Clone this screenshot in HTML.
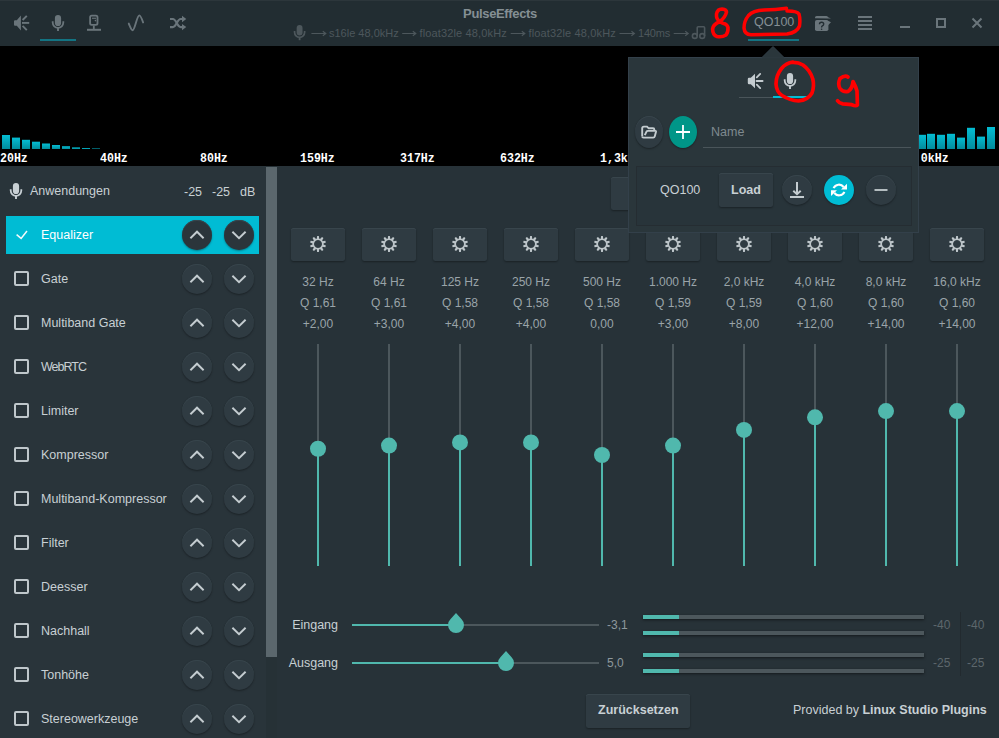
<!DOCTYPE html><html><head><meta charset="utf-8"><style>
*{box-sizing:border-box}
html,body{margin:0;padding:0}
body{width:999px;height:738px;overflow:hidden;position:relative;background:#273238;font-family:"Liberation Sans",sans-serif;color:#c8d0d4}
.abs{position:absolute}
.t{position:absolute;white-space:nowrap;line-height:1}
svg{position:absolute;overflow:visible}
.btn{position:absolute;background:#2f3b42;border-radius:2.5px;box-shadow:0 1px 2px rgba(0,0,0,.35), inset 0 1px 0 #38454c}
.circ{position:absolute;border-radius:50%;background:#2f3b42;box-shadow:0 1px 2px rgba(0,0,0,.35), inset 0 1px 0 #38454c}
</style></head><body>

<div class="abs" style="left:0;top:0;width:999px;height:46px;background:#222d32;border-top:1px solid #2c363b"></div>
<svg width="999" height="46" style="left:0;top:0">
<path d="M14 21.2 Q14 20.2 15 20.2 L16.8 20.2 L20.9 15.6 L20.9 30.4 L16.8 25.8 L15 25.8 Q14 25.8 14 24.8 Z" fill="#6a757b"/>
<g stroke="#6a757b" stroke-width="1.9" stroke-linecap="butt"><line x1="22.6" y1="20" x2="26.8" y2="15.8"/><line x1="22" y1="22.9" x2="29.2" y2="22.9"/><line x1="22.6" y1="25.9" x2="26.8" y2="30.1"/></g>
<g transform="translate(50 15) scale(1)"><rect x="4.9" y="0" width="6.2" height="11" rx="3.1" fill="#6a757b"/><path d="M2.7 6.2 V7.6 A5.3 5.3 0 0 0 13.3 7.6 V6.2" fill="none" stroke="#6a757b" stroke-width="1.8"/><rect x="7.05" y="12.8" width="1.9" height="3.2" fill="#6a757b"/></g>
<rect x="90.1" y="15.7" width="7.4" height="9.2" rx="1.6" fill="none" stroke="#6a757b" stroke-width="1.8"/>
<rect x="92" y="17.7" width="4" height="1.1" fill="#6a757b"/><circle cx="95.4" cy="20.6" r="0.8" fill="#6a757b"/>
<rect x="92.9" y="25.5" width="1.8" height="3.5" fill="#6a757b"/><rect x="87" y="28.8" width="14" height="2" fill="#6a757b"/>
<path d="M128.8 23.6 C130.6 28 131.4 30.2 132.6 30.2 C134.8 30.2 136.9 15.4 139.4 15.4 C140.6 15.4 141.7 18.5 143.1 22.4" fill="none" stroke="#6a757b" stroke-width="1.9" stroke-linecap="round" stroke-linejoin="round"/>
<path d="M170 19 H172.8 C176.5 19 177 27.1 180.7 27.1 H183" fill="none" stroke="#6a757b" stroke-width="2.1"/>
<path d="M170 27.1 H172.8 C176.5 27.1 177 19 180.7 19 H183" fill="none" stroke="#6a757b" stroke-width="2.1"/>
<path d="M182 15.8 L186.3 19 L182 22.2 Z M182 23.9 L186.3 27.1 L182 30.3 Z" fill="#6a757b"/>
<path d="M815 18.3 V17.6 Q815 16 816.6 16 H826.3 Q827.3 16 828.2 17.2 L831 18.4 L828.4 18.6 Z" fill="#6a757b"/>
<path d="M827.5 20.6 L831 22.3 L828 25.2 Z" fill="#6a757b"/>
<rect x="815" y="20" width="13.4" height="11" rx="1.8" fill="#6a757b"/>
<path d="M819.5 24.3 Q819.5 22.2 821.6 22.2 Q823.7 22.2 823.7 24.1 Q823.7 25.3 822.4 25.9 Q821.6 26.3 821.6 27.4" fill="none" stroke="#222d32" stroke-width="1.4"/><circle cx="821.6" cy="29.2" r="0.8" fill="#222d32"/>
<rect x="858" y="16" width="14" height="2" fill="#6a757b"/>
<rect x="858" y="20" width="14" height="2" fill="#6a757b"/>
<rect x="858" y="24" width="14" height="2" fill="#6a757b"/>
<rect x="858" y="28" width="14" height="2" fill="#6a757b"/>
<rect x="900" y="26" width="10" height="2" fill="#6a757b"/>
<rect x="937" y="19" width="8" height="8" fill="none" stroke="#6a757b" stroke-width="2"/>
<path d="M972.5 18.5 L981.5 27.5 M981.5 18.5 L972.5 27.5" stroke="#6a757b" stroke-width="2"/>
<g fill="none" stroke="#4d575c" stroke-width="1.6"><circle cx="694.8" cy="36" r="2.4"/><circle cx="702.2" cy="36" r="2.4"/><path d="M697.2 36 V27.8 Q697.2 26.8 698.2 26.8 H703.6 Q704.6 26.8 704.6 27.8 V36"/></g>
<g transform="translate(292 25) scale(0.95)"><rect x="4.9" y="0" width="6.2" height="11" rx="3.1" fill="#4d575c"/><path d="M2.7 6.2 V7.6 A5.3 5.3 0 0 0 13.3 7.6 V6.2" fill="none" stroke="#4d575c" stroke-width="1.8"/><rect x="7.05" y="12.8" width="1.9" height="3.2" fill="#4d575c"/></g>
<path d="M311.4 33.5 H325.4 M322.8 31.3 L325.8 33.5 L322.8 35.7" fill="none" stroke="#4d575c" stroke-width="1.15"/>
<path d="M402.2 33.5 H415.4 M412.8 31.3 L415.8 33.5 L412.8 35.7" fill="none" stroke="#4d575c" stroke-width="1.15"/>
<path d="M510.7 33.5 H524.4 M521.8 31.3 L524.8 33.5 L521.8 35.7" fill="none" stroke="#4d575c" stroke-width="1.15"/>
<path d="M619.5 33.5 H634 M631.4 31.3 L634.4 33.5 L631.4 35.7" fill="none" stroke="#4d575c" stroke-width="1.15"/>
<path d="M673.7 33.5 H687.8 M685.2 31.3 L688.2 33.5 L685.2 35.7" fill="none" stroke="#4d575c" stroke-width="1.15"/>
<rect x="40" y="39" width="36" height="2" fill="#137483"/>
<rect x="748" y="39" width="51" height="2" fill="#137483"/>
</svg>
<div class="t" style="left:500px;top:7px;transform:translateX(-50%);font-size:13px;letter-spacing:-0.35px;font-weight:bold;color:#858f94">PulseEffects</div>
<div class="t" style="left:329px;top:28px;font-size:11px;letter-spacing:0px;color:#4d575c">s16le 48,0kHz</div>
<div class="t" style="left:419.5px;top:28px;font-size:11px;letter-spacing:0.14px;color:#4d575c">float32le 48,0kHz</div>
<div class="t" style="left:528.5px;top:28px;font-size:11px;letter-spacing:0.14px;color:#4d575c">float32le 48,0kHz</div>
<div class="t" style="left:638px;top:28px;font-size:11px;letter-spacing:-0.2px;color:#4d575c">140ms</div>
<div class="t" style="left:754px;top:16px;font-size:12.5px;color:#858f94">QO100</div>
<div class="abs" style="left:0;top:46px;width:999px;height:120px;background:#000"></div>
<svg width="999" height="166" style="left:0;top:0"><defs><linearGradient id="bg" x1="0" y1="0" x2="0" y2="1"><stop offset="0" stop-color="#04bdd3"/><stop offset="1" stop-color="#028c9c"/></linearGradient></defs>
<rect x="2" y="135" width="8" height="14" fill="url(#bg)"/>
<rect x="12" y="137.6" width="8" height="11.4" fill="url(#bg)"/>
<rect x="22" y="139.8" width="8" height="9.2" fill="url(#bg)"/>
<rect x="32" y="141.7" width="8" height="7.3" fill="url(#bg)"/>
<rect x="42" y="143.5" width="8" height="5.5" fill="url(#bg)"/>
<rect x="52" y="145" width="8" height="4" fill="url(#bg)"/>
<rect x="62" y="146.2" width="8" height="2.8" fill="url(#bg)"/>
<rect x="72" y="147.4" width="8" height="1.6" fill="url(#bg)"/>
<rect x="82" y="148" width="8" height="1" fill="url(#bg)"/>
<rect x="92" y="148.5" width="8" height="0.5" fill="url(#bg)"/>
<rect x="918" y="134.8" width="8" height="14.2" fill="url(#bg)"/>
<rect x="927" y="133.8" width="8" height="15.2" fill="url(#bg)"/>
<rect x="937" y="134.8" width="8" height="14.2" fill="url(#bg)"/>
<rect x="947" y="133.8" width="8" height="15.2" fill="url(#bg)"/>
<rect x="957" y="137.6" width="8" height="11.4" fill="url(#bg)"/>
<rect x="967" y="127.8" width="8" height="21.2" fill="url(#bg)"/>
<rect x="977" y="136.6" width="8" height="12.4" fill="url(#bg)"/>
<rect x="987" y="127" width="8" height="22" fill="url(#bg)"/>
</svg>
<div class="t" style="left:0px;top:153px;height:12px;font-family:'Liberation Mono',monospace;font-weight:bold;font-size:11.6px;color:#fff;transform:scaleY(1.16);transform-origin:0 100%">20Hz</div>
<div class="t" style="left:100px;top:153px;height:12px;font-family:'Liberation Mono',monospace;font-weight:bold;font-size:11.6px;color:#fff;transform:scaleY(1.16);transform-origin:0 100%">40Hz</div>
<div class="t" style="left:200px;top:153px;height:12px;font-family:'Liberation Mono',monospace;font-weight:bold;font-size:11.6px;color:#fff;transform:scaleY(1.16);transform-origin:0 100%">80Hz</div>
<div class="t" style="left:300px;top:153px;height:12px;font-family:'Liberation Mono',monospace;font-weight:bold;font-size:11.6px;color:#fff;transform:scaleY(1.16);transform-origin:0 100%">159Hz</div>
<div class="t" style="left:400px;top:153px;height:12px;font-family:'Liberation Mono',monospace;font-weight:bold;font-size:11.6px;color:#fff;transform:scaleY(1.16);transform-origin:0 100%">317Hz</div>
<div class="t" style="left:500px;top:153px;height:12px;font-family:'Liberation Mono',monospace;font-weight:bold;font-size:11.6px;color:#fff;transform:scaleY(1.16);transform-origin:0 100%">632Hz</div>
<div class="t" style="left:600px;top:153px;height:12px;font-family:'Liberation Mono',monospace;font-weight:bold;font-size:11.6px;color:#fff;transform:scaleY(1.16);transform-origin:0 100%">1,3kHz</div>
<div class="t" style="left:700px;top:153px;height:12px;font-family:'Liberation Mono',monospace;font-weight:bold;font-size:11.6px;color:#fff;transform:scaleY(1.16);transform-origin:0 100%">2,5kHz</div>
<div class="t" style="left:800px;top:153px;height:12px;font-family:'Liberation Mono',monospace;font-weight:bold;font-size:11.6px;color:#fff;transform:scaleY(1.16);transform-origin:0 100%">5,0kHz</div>
<div class="t" style="left:900px;top:153px;height:12px;font-family:'Liberation Mono',monospace;font-weight:bold;font-size:11.6px;color:#fff;transform:scaleY(1.16);transform-origin:0 100%">10,0kHz</div>
<div class="abs" style="left:0;top:166px;width:266px;height:572px;background:#29343a"></div>
<div class="abs" style="left:266px;top:166px;width:11px;height:572px;background:#263136"></div>
<div class="abs" style="left:266px;top:167px;width:11px;height:490px;background:#5b676d"></div>
<svg width="30" height="30" style="left:0;top:0"><g transform="translate(8 183) scale(1)"><rect x="4.9" y="0" width="6.2" height="11" rx="3.1" fill="#c8d0d4"/><path d="M2.7 6.2 V7.6 A5.3 5.3 0 0 0 13.3 7.6 V6.2" fill="none" stroke="#c8d0d4" stroke-width="1.8"/><rect x="7.05" y="12.8" width="1.9" height="3.2" fill="#c8d0d4"/></g></svg>
<div class="t" style="left:30px;top:185px;font-size:12.5px">Anwendungen</div>
<div class="t" style="left:184px;top:186px;font-size:12.5px">-25</div>
<div class="t" style="left:212px;top:186px;font-size:12.5px">-25</div>
<div class="t" style="left:240px;top:186px;font-size:12.5px">dB</div>
<div class="abs" style="left:6px;top:216px;width:253px;height:38px;background:#00bcd4"></div>
<div class="t" style="left:41px;top:229px;font-size:12.5px;color:#ffffff;letter-spacing:0">Equalizer</div>
<svg width="1" height="1" style="left:0;top:0"><path d="M16.6 234.7 L21.1 238.4 L27 231" fill="none" stroke="#f4fbfc" stroke-width="1.5"/></svg>
<div class="circ" style="left:182px;top:220px;width:30px;height:30px;background:#2b353b"></div>
<svg width="1" height="1" style="left:0;top:0"><path d="M190.4 238.2 L197 231.7 L203.6 238.2" fill="none" stroke="#c4ccd0" stroke-width="1.9"/></svg>
<div class="circ" style="left:224px;top:220px;width:30px;height:30px;background:#2b353b"></div>
<svg width="1" height="1" style="left:0;top:0"><path d="M232.4 231.7 L239 238.2 L245.6 231.7" fill="none" stroke="#c4ccd0" stroke-width="1.9"/></svg>
<div class="t" style="left:41px;top:273px;font-size:12.5px;color:#c8d0d4;letter-spacing:0">Gate</div>
<div class="abs" style="left:14px;top:271px;width:15px;height:15px;border:2px solid #bfc7cb;border-radius:2px"></div>
<div class="circ" style="left:182px;top:264px;width:30px;height:30px;background:#2f3b42"></div>
<svg width="1" height="1" style="left:0;top:0"><path d="M190.4 282.2 L197 275.7 L203.6 282.2" fill="none" stroke="#c4ccd0" stroke-width="1.9"/></svg>
<div class="circ" style="left:224px;top:264px;width:30px;height:30px;background:#2f3b42"></div>
<svg width="1" height="1" style="left:0;top:0"><path d="M232.4 275.7 L239 282.2 L245.6 275.7" fill="none" stroke="#c4ccd0" stroke-width="1.9"/></svg>
<div class="t" style="left:41px;top:317px;font-size:12.5px;color:#c8d0d4;letter-spacing:0">Multiband Gate</div>
<div class="abs" style="left:14px;top:315px;width:15px;height:15px;border:2px solid #bfc7cb;border-radius:2px"></div>
<div class="circ" style="left:182px;top:308px;width:30px;height:30px;background:#2f3b42"></div>
<svg width="1" height="1" style="left:0;top:0"><path d="M190.4 326.2 L197 319.7 L203.6 326.2" fill="none" stroke="#c4ccd0" stroke-width="1.9"/></svg>
<div class="circ" style="left:224px;top:308px;width:30px;height:30px;background:#2f3b42"></div>
<svg width="1" height="1" style="left:0;top:0"><path d="M232.4 319.7 L239 326.2 L245.6 319.7" fill="none" stroke="#c4ccd0" stroke-width="1.9"/></svg>
<div class="t" style="left:41px;top:361px;font-size:12.5px;color:#c8d0d4;letter-spacing:-1px">WebRTC</div>
<div class="abs" style="left:14px;top:359px;width:15px;height:15px;border:2px solid #bfc7cb;border-radius:2px"></div>
<div class="circ" style="left:182px;top:352px;width:30px;height:30px;background:#2f3b42"></div>
<svg width="1" height="1" style="left:0;top:0"><path d="M190.4 370.2 L197 363.7 L203.6 370.2" fill="none" stroke="#c4ccd0" stroke-width="1.9"/></svg>
<div class="circ" style="left:224px;top:352px;width:30px;height:30px;background:#2f3b42"></div>
<svg width="1" height="1" style="left:0;top:0"><path d="M232.4 363.7 L239 370.2 L245.6 363.7" fill="none" stroke="#c4ccd0" stroke-width="1.9"/></svg>
<div class="t" style="left:41px;top:405px;font-size:12.5px;color:#c8d0d4;letter-spacing:0">Limiter</div>
<div class="abs" style="left:14px;top:403px;width:15px;height:15px;border:2px solid #bfc7cb;border-radius:2px"></div>
<div class="circ" style="left:182px;top:396px;width:30px;height:30px;background:#2f3b42"></div>
<svg width="1" height="1" style="left:0;top:0"><path d="M190.4 414.2 L197 407.7 L203.6 414.2" fill="none" stroke="#c4ccd0" stroke-width="1.9"/></svg>
<div class="circ" style="left:224px;top:396px;width:30px;height:30px;background:#2f3b42"></div>
<svg width="1" height="1" style="left:0;top:0"><path d="M232.4 407.7 L239 414.2 L245.6 407.7" fill="none" stroke="#c4ccd0" stroke-width="1.9"/></svg>
<div class="t" style="left:41px;top:449px;font-size:12.5px;color:#c8d0d4;letter-spacing:0">Kompressor</div>
<div class="abs" style="left:14px;top:447px;width:15px;height:15px;border:2px solid #bfc7cb;border-radius:2px"></div>
<div class="circ" style="left:182px;top:440px;width:30px;height:30px;background:#2f3b42"></div>
<svg width="1" height="1" style="left:0;top:0"><path d="M190.4 458.2 L197 451.7 L203.6 458.2" fill="none" stroke="#c4ccd0" stroke-width="1.9"/></svg>
<div class="circ" style="left:224px;top:440px;width:30px;height:30px;background:#2f3b42"></div>
<svg width="1" height="1" style="left:0;top:0"><path d="M232.4 451.7 L239 458.2 L245.6 451.7" fill="none" stroke="#c4ccd0" stroke-width="1.9"/></svg>
<div class="t" style="left:41px;top:493px;font-size:12.5px;color:#c8d0d4;letter-spacing:0">Multiband-Kompressor</div>
<div class="abs" style="left:14px;top:491px;width:15px;height:15px;border:2px solid #bfc7cb;border-radius:2px"></div>
<div class="circ" style="left:182px;top:484px;width:30px;height:30px;background:#2f3b42"></div>
<svg width="1" height="1" style="left:0;top:0"><path d="M190.4 502.2 L197 495.7 L203.6 502.2" fill="none" stroke="#c4ccd0" stroke-width="1.9"/></svg>
<div class="circ" style="left:224px;top:484px;width:30px;height:30px;background:#2f3b42"></div>
<svg width="1" height="1" style="left:0;top:0"><path d="M232.4 495.7 L239 502.2 L245.6 495.7" fill="none" stroke="#c4ccd0" stroke-width="1.9"/></svg>
<div class="t" style="left:41px;top:537px;font-size:12.5px;color:#c8d0d4;letter-spacing:0">Filter</div>
<div class="abs" style="left:14px;top:535px;width:15px;height:15px;border:2px solid #bfc7cb;border-radius:2px"></div>
<div class="circ" style="left:182px;top:528px;width:30px;height:30px;background:#2f3b42"></div>
<svg width="1" height="1" style="left:0;top:0"><path d="M190.4 546.2 L197 539.7 L203.6 546.2" fill="none" stroke="#c4ccd0" stroke-width="1.9"/></svg>
<div class="circ" style="left:224px;top:528px;width:30px;height:30px;background:#2f3b42"></div>
<svg width="1" height="1" style="left:0;top:0"><path d="M232.4 539.7 L239 546.2 L245.6 539.7" fill="none" stroke="#c4ccd0" stroke-width="1.9"/></svg>
<div class="t" style="left:41px;top:581px;font-size:12.5px;color:#c8d0d4;letter-spacing:0">Deesser</div>
<div class="abs" style="left:14px;top:579px;width:15px;height:15px;border:2px solid #bfc7cb;border-radius:2px"></div>
<div class="circ" style="left:182px;top:572px;width:30px;height:30px;background:#2f3b42"></div>
<svg width="1" height="1" style="left:0;top:0"><path d="M190.4 590.2 L197 583.7 L203.6 590.2" fill="none" stroke="#c4ccd0" stroke-width="1.9"/></svg>
<div class="circ" style="left:224px;top:572px;width:30px;height:30px;background:#2f3b42"></div>
<svg width="1" height="1" style="left:0;top:0"><path d="M232.4 583.7 L239 590.2 L245.6 583.7" fill="none" stroke="#c4ccd0" stroke-width="1.9"/></svg>
<div class="t" style="left:41px;top:625px;font-size:12.5px;color:#c8d0d4;letter-spacing:0">Nachhall</div>
<div class="abs" style="left:14px;top:623px;width:15px;height:15px;border:2px solid #bfc7cb;border-radius:2px"></div>
<div class="circ" style="left:182px;top:616px;width:30px;height:30px;background:#2f3b42"></div>
<svg width="1" height="1" style="left:0;top:0"><path d="M190.4 634.2 L197 627.7 L203.6 634.2" fill="none" stroke="#c4ccd0" stroke-width="1.9"/></svg>
<div class="circ" style="left:224px;top:616px;width:30px;height:30px;background:#2f3b42"></div>
<svg width="1" height="1" style="left:0;top:0"><path d="M232.4 627.7 L239 634.2 L245.6 627.7" fill="none" stroke="#c4ccd0" stroke-width="1.9"/></svg>
<div class="t" style="left:41px;top:669px;font-size:12.5px;color:#c8d0d4;letter-spacing:0">Tonhöhe</div>
<div class="abs" style="left:14px;top:667px;width:15px;height:15px;border:2px solid #bfc7cb;border-radius:2px"></div>
<div class="circ" style="left:182px;top:660px;width:30px;height:30px;background:#2f3b42"></div>
<svg width="1" height="1" style="left:0;top:0"><path d="M190.4 678.2 L197 671.7 L203.6 678.2" fill="none" stroke="#c4ccd0" stroke-width="1.9"/></svg>
<div class="circ" style="left:224px;top:660px;width:30px;height:30px;background:#2f3b42"></div>
<svg width="1" height="1" style="left:0;top:0"><path d="M232.4 671.7 L239 678.2 L245.6 671.7" fill="none" stroke="#c4ccd0" stroke-width="1.9"/></svg>
<div class="t" style="left:41px;top:713px;font-size:12.5px;color:#c8d0d4;letter-spacing:0">Stereowerkzeuge</div>
<div class="abs" style="left:14px;top:711px;width:15px;height:15px;border:2px solid #bfc7cb;border-radius:2px"></div>
<div class="circ" style="left:182px;top:704px;width:30px;height:30px;background:#2f3b42"></div>
<svg width="1" height="1" style="left:0;top:0"><path d="M190.4 722.2 L197 715.7 L203.6 722.2" fill="none" stroke="#c4ccd0" stroke-width="1.9"/></svg>
<div class="circ" style="left:224px;top:704px;width:30px;height:30px;background:#2f3b42"></div>
<svg width="1" height="1" style="left:0;top:0"><path d="M232.4 715.7 L239 722.2 L245.6 715.7" fill="none" stroke="#c4ccd0" stroke-width="1.9"/></svg>
<div class="btn" style="left:611px;top:177px;width:40px;height:33px"></div>
<div class="btn" style="left:291px;top:228px;width:54px;height:33px"></div>
<svg width="1" height="1" style="left:0;top:0"><g fill="#bec6ca"><path fill-rule="evenodd" d="M318 238.5 a5.5 5.5 0 1 0 0.01 0 Z M318 240 a4 4 0 1 0 0.01 0 Z"/><path d="M316.7 239.2 L317.1 236 L318.9 236 L319.3 239.2 Z" transform="rotate(0 318 244)"/><path d="M316.7 239.2 L317.1 236 L318.9 236 L319.3 239.2 Z" transform="rotate(36 318 244)"/><path d="M316.7 239.2 L317.1 236 L318.9 236 L319.3 239.2 Z" transform="rotate(72 318 244)"/><path d="M316.7 239.2 L317.1 236 L318.9 236 L319.3 239.2 Z" transform="rotate(108 318 244)"/><path d="M316.7 239.2 L317.1 236 L318.9 236 L319.3 239.2 Z" transform="rotate(144 318 244)"/><path d="M316.7 239.2 L317.1 236 L318.9 236 L319.3 239.2 Z" transform="rotate(180 318 244)"/><path d="M316.7 239.2 L317.1 236 L318.9 236 L319.3 239.2 Z" transform="rotate(216 318 244)"/><path d="M316.7 239.2 L317.1 236 L318.9 236 L319.3 239.2 Z" transform="rotate(252 318 244)"/><path d="M316.7 239.2 L317.1 236 L318.9 236 L319.3 239.2 Z" transform="rotate(288 318 244)"/><path d="M316.7 239.2 L317.1 236 L318.9 236 L319.3 239.2 Z" transform="rotate(324 318 244)"/></g></svg>
<div class="t" style="left:278px;top:276px;width:80px;text-align:center;font-size:12px;color:#9aa4a9">32 Hz</div>
<div class="t" style="left:278px;top:297px;width:80px;text-align:center;font-size:12px;color:#9aa4a9">Q 1,61</div>
<div class="t" style="left:278px;top:318px;width:80px;text-align:center;font-size:12px;color:#9aa4a9">+2,00</div>
<svg width="1" height="1" style="left:0;top:0"><rect x="317" y="344" width="2" height="104.72" fill="#4c575c"/><rect x="317" y="448.72" width="2" height="117.28" fill="#50b8ad"/><circle cx="318" cy="448.72" r="8" fill="#50b8ad"/></svg>
<div class="btn" style="left:362px;top:228px;width:54px;height:33px"></div>
<svg width="1" height="1" style="left:0;top:0"><g fill="#bec6ca"><path fill-rule="evenodd" d="M389 238.5 a5.5 5.5 0 1 0 0.01 0 Z M389 240 a4 4 0 1 0 0.01 0 Z"/><path d="M387.7 239.2 L388.1 236 L389.9 236 L390.3 239.2 Z" transform="rotate(0 389 244)"/><path d="M387.7 239.2 L388.1 236 L389.9 236 L390.3 239.2 Z" transform="rotate(36 389 244)"/><path d="M387.7 239.2 L388.1 236 L389.9 236 L390.3 239.2 Z" transform="rotate(72 389 244)"/><path d="M387.7 239.2 L388.1 236 L389.9 236 L390.3 239.2 Z" transform="rotate(108 389 244)"/><path d="M387.7 239.2 L388.1 236 L389.9 236 L390.3 239.2 Z" transform="rotate(144 389 244)"/><path d="M387.7 239.2 L388.1 236 L389.9 236 L390.3 239.2 Z" transform="rotate(180 389 244)"/><path d="M387.7 239.2 L388.1 236 L389.9 236 L390.3 239.2 Z" transform="rotate(216 389 244)"/><path d="M387.7 239.2 L388.1 236 L389.9 236 L390.3 239.2 Z" transform="rotate(252 389 244)"/><path d="M387.7 239.2 L388.1 236 L389.9 236 L390.3 239.2 Z" transform="rotate(288 389 244)"/><path d="M387.7 239.2 L388.1 236 L389.9 236 L390.3 239.2 Z" transform="rotate(324 389 244)"/></g></svg>
<div class="t" style="left:349px;top:276px;width:80px;text-align:center;font-size:12px;color:#9aa4a9">64 Hz</div>
<div class="t" style="left:349px;top:297px;width:80px;text-align:center;font-size:12px;color:#9aa4a9">Q 1,61</div>
<div class="t" style="left:349px;top:318px;width:80px;text-align:center;font-size:12px;color:#9aa4a9">+3,00</div>
<svg width="1" height="1" style="left:0;top:0"><rect x="388" y="344" width="2" height="101.58" fill="#4c575c"/><rect x="388" y="445.58" width="2" height="120.42" fill="#50b8ad"/><circle cx="389" cy="445.58" r="8" fill="#50b8ad"/></svg>
<div class="btn" style="left:433px;top:228px;width:54px;height:33px"></div>
<svg width="1" height="1" style="left:0;top:0"><g fill="#bec6ca"><path fill-rule="evenodd" d="M460 238.5 a5.5 5.5 0 1 0 0.01 0 Z M460 240 a4 4 0 1 0 0.01 0 Z"/><path d="M458.7 239.2 L459.1 236 L460.9 236 L461.3 239.2 Z" transform="rotate(0 460 244)"/><path d="M458.7 239.2 L459.1 236 L460.9 236 L461.3 239.2 Z" transform="rotate(36 460 244)"/><path d="M458.7 239.2 L459.1 236 L460.9 236 L461.3 239.2 Z" transform="rotate(72 460 244)"/><path d="M458.7 239.2 L459.1 236 L460.9 236 L461.3 239.2 Z" transform="rotate(108 460 244)"/><path d="M458.7 239.2 L459.1 236 L460.9 236 L461.3 239.2 Z" transform="rotate(144 460 244)"/><path d="M458.7 239.2 L459.1 236 L460.9 236 L461.3 239.2 Z" transform="rotate(180 460 244)"/><path d="M458.7 239.2 L459.1 236 L460.9 236 L461.3 239.2 Z" transform="rotate(216 460 244)"/><path d="M458.7 239.2 L459.1 236 L460.9 236 L461.3 239.2 Z" transform="rotate(252 460 244)"/><path d="M458.7 239.2 L459.1 236 L460.9 236 L461.3 239.2 Z" transform="rotate(288 460 244)"/><path d="M458.7 239.2 L459.1 236 L460.9 236 L461.3 239.2 Z" transform="rotate(324 460 244)"/></g></svg>
<div class="t" style="left:420px;top:276px;width:80px;text-align:center;font-size:12px;color:#9aa4a9">125 Hz</div>
<div class="t" style="left:420px;top:297px;width:80px;text-align:center;font-size:12px;color:#9aa4a9">Q 1,58</div>
<div class="t" style="left:420px;top:318px;width:80px;text-align:center;font-size:12px;color:#9aa4a9">+4,00</div>
<svg width="1" height="1" style="left:0;top:0"><rect x="459" y="344" width="2" height="98.44" fill="#4c575c"/><rect x="459" y="442.44" width="2" height="123.56" fill="#50b8ad"/><circle cx="460" cy="442.44" r="8" fill="#50b8ad"/></svg>
<div class="btn" style="left:504px;top:228px;width:54px;height:33px"></div>
<svg width="1" height="1" style="left:0;top:0"><g fill="#bec6ca"><path fill-rule="evenodd" d="M531 238.5 a5.5 5.5 0 1 0 0.01 0 Z M531 240 a4 4 0 1 0 0.01 0 Z"/><path d="M529.7 239.2 L530.1 236 L531.9 236 L532.3 239.2 Z" transform="rotate(0 531 244)"/><path d="M529.7 239.2 L530.1 236 L531.9 236 L532.3 239.2 Z" transform="rotate(36 531 244)"/><path d="M529.7 239.2 L530.1 236 L531.9 236 L532.3 239.2 Z" transform="rotate(72 531 244)"/><path d="M529.7 239.2 L530.1 236 L531.9 236 L532.3 239.2 Z" transform="rotate(108 531 244)"/><path d="M529.7 239.2 L530.1 236 L531.9 236 L532.3 239.2 Z" transform="rotate(144 531 244)"/><path d="M529.7 239.2 L530.1 236 L531.9 236 L532.3 239.2 Z" transform="rotate(180 531 244)"/><path d="M529.7 239.2 L530.1 236 L531.9 236 L532.3 239.2 Z" transform="rotate(216 531 244)"/><path d="M529.7 239.2 L530.1 236 L531.9 236 L532.3 239.2 Z" transform="rotate(252 531 244)"/><path d="M529.7 239.2 L530.1 236 L531.9 236 L532.3 239.2 Z" transform="rotate(288 531 244)"/><path d="M529.7 239.2 L530.1 236 L531.9 236 L532.3 239.2 Z" transform="rotate(324 531 244)"/></g></svg>
<div class="t" style="left:491px;top:276px;width:80px;text-align:center;font-size:12px;color:#9aa4a9">250 Hz</div>
<div class="t" style="left:491px;top:297px;width:80px;text-align:center;font-size:12px;color:#9aa4a9">Q 1,58</div>
<div class="t" style="left:491px;top:318px;width:80px;text-align:center;font-size:12px;color:#9aa4a9">+4,00</div>
<svg width="1" height="1" style="left:0;top:0"><rect x="530" y="344" width="2" height="98.44" fill="#4c575c"/><rect x="530" y="442.44" width="2" height="123.56" fill="#50b8ad"/><circle cx="531" cy="442.44" r="8" fill="#50b8ad"/></svg>
<div class="btn" style="left:575px;top:228px;width:54px;height:33px"></div>
<svg width="1" height="1" style="left:0;top:0"><g fill="#bec6ca"><path fill-rule="evenodd" d="M602 238.5 a5.5 5.5 0 1 0 0.01 0 Z M602 240 a4 4 0 1 0 0.01 0 Z"/><path d="M600.7 239.2 L601.1 236 L602.9 236 L603.3 239.2 Z" transform="rotate(0 602 244)"/><path d="M600.7 239.2 L601.1 236 L602.9 236 L603.3 239.2 Z" transform="rotate(36 602 244)"/><path d="M600.7 239.2 L601.1 236 L602.9 236 L603.3 239.2 Z" transform="rotate(72 602 244)"/><path d="M600.7 239.2 L601.1 236 L602.9 236 L603.3 239.2 Z" transform="rotate(108 602 244)"/><path d="M600.7 239.2 L601.1 236 L602.9 236 L603.3 239.2 Z" transform="rotate(144 602 244)"/><path d="M600.7 239.2 L601.1 236 L602.9 236 L603.3 239.2 Z" transform="rotate(180 602 244)"/><path d="M600.7 239.2 L601.1 236 L602.9 236 L603.3 239.2 Z" transform="rotate(216 602 244)"/><path d="M600.7 239.2 L601.1 236 L602.9 236 L603.3 239.2 Z" transform="rotate(252 602 244)"/><path d="M600.7 239.2 L601.1 236 L602.9 236 L603.3 239.2 Z" transform="rotate(288 602 244)"/><path d="M600.7 239.2 L601.1 236 L602.9 236 L603.3 239.2 Z" transform="rotate(324 602 244)"/></g></svg>
<div class="t" style="left:562px;top:276px;width:80px;text-align:center;font-size:12px;color:#9aa4a9">500 Hz</div>
<div class="t" style="left:562px;top:297px;width:80px;text-align:center;font-size:12px;color:#9aa4a9">Q 1,58</div>
<div class="t" style="left:562px;top:318px;width:80px;text-align:center;font-size:12px;color:#9aa4a9">0,00</div>
<svg width="1" height="1" style="left:0;top:0"><rect x="601" y="344" width="2" height="111" fill="#4c575c"/><rect x="601" y="455" width="2" height="111" fill="#50b8ad"/><circle cx="602" cy="455" r="8" fill="#50b8ad"/></svg>
<div class="btn" style="left:646px;top:228px;width:54px;height:33px"></div>
<svg width="1" height="1" style="left:0;top:0"><g fill="#bec6ca"><path fill-rule="evenodd" d="M673 238.5 a5.5 5.5 0 1 0 0.01 0 Z M673 240 a4 4 0 1 0 0.01 0 Z"/><path d="M671.7 239.2 L672.1 236 L673.9 236 L674.3 239.2 Z" transform="rotate(0 673 244)"/><path d="M671.7 239.2 L672.1 236 L673.9 236 L674.3 239.2 Z" transform="rotate(36 673 244)"/><path d="M671.7 239.2 L672.1 236 L673.9 236 L674.3 239.2 Z" transform="rotate(72 673 244)"/><path d="M671.7 239.2 L672.1 236 L673.9 236 L674.3 239.2 Z" transform="rotate(108 673 244)"/><path d="M671.7 239.2 L672.1 236 L673.9 236 L674.3 239.2 Z" transform="rotate(144 673 244)"/><path d="M671.7 239.2 L672.1 236 L673.9 236 L674.3 239.2 Z" transform="rotate(180 673 244)"/><path d="M671.7 239.2 L672.1 236 L673.9 236 L674.3 239.2 Z" transform="rotate(216 673 244)"/><path d="M671.7 239.2 L672.1 236 L673.9 236 L674.3 239.2 Z" transform="rotate(252 673 244)"/><path d="M671.7 239.2 L672.1 236 L673.9 236 L674.3 239.2 Z" transform="rotate(288 673 244)"/><path d="M671.7 239.2 L672.1 236 L673.9 236 L674.3 239.2 Z" transform="rotate(324 673 244)"/></g></svg>
<div class="t" style="left:633px;top:276px;width:80px;text-align:center;font-size:12px;color:#9aa4a9">1.000 Hz</div>
<div class="t" style="left:633px;top:297px;width:80px;text-align:center;font-size:12px;color:#9aa4a9">Q 1,59</div>
<div class="t" style="left:633px;top:318px;width:80px;text-align:center;font-size:12px;color:#9aa4a9">+3,00</div>
<svg width="1" height="1" style="left:0;top:0"><rect x="672" y="344" width="2" height="101.58" fill="#4c575c"/><rect x="672" y="445.58" width="2" height="120.42" fill="#50b8ad"/><circle cx="673" cy="445.58" r="8" fill="#50b8ad"/></svg>
<div class="btn" style="left:717px;top:228px;width:54px;height:33px"></div>
<svg width="1" height="1" style="left:0;top:0"><g fill="#bec6ca"><path fill-rule="evenodd" d="M744 238.5 a5.5 5.5 0 1 0 0.01 0 Z M744 240 a4 4 0 1 0 0.01 0 Z"/><path d="M742.7 239.2 L743.1 236 L744.9 236 L745.3 239.2 Z" transform="rotate(0 744 244)"/><path d="M742.7 239.2 L743.1 236 L744.9 236 L745.3 239.2 Z" transform="rotate(36 744 244)"/><path d="M742.7 239.2 L743.1 236 L744.9 236 L745.3 239.2 Z" transform="rotate(72 744 244)"/><path d="M742.7 239.2 L743.1 236 L744.9 236 L745.3 239.2 Z" transform="rotate(108 744 244)"/><path d="M742.7 239.2 L743.1 236 L744.9 236 L745.3 239.2 Z" transform="rotate(144 744 244)"/><path d="M742.7 239.2 L743.1 236 L744.9 236 L745.3 239.2 Z" transform="rotate(180 744 244)"/><path d="M742.7 239.2 L743.1 236 L744.9 236 L745.3 239.2 Z" transform="rotate(216 744 244)"/><path d="M742.7 239.2 L743.1 236 L744.9 236 L745.3 239.2 Z" transform="rotate(252 744 244)"/><path d="M742.7 239.2 L743.1 236 L744.9 236 L745.3 239.2 Z" transform="rotate(288 744 244)"/><path d="M742.7 239.2 L743.1 236 L744.9 236 L745.3 239.2 Z" transform="rotate(324 744 244)"/></g></svg>
<div class="t" style="left:704px;top:276px;width:80px;text-align:center;font-size:12px;color:#9aa4a9">2,0 kHz</div>
<div class="t" style="left:704px;top:297px;width:80px;text-align:center;font-size:12px;color:#9aa4a9">Q 1,59</div>
<div class="t" style="left:704px;top:318px;width:80px;text-align:center;font-size:12px;color:#9aa4a9">+8,00</div>
<svg width="1" height="1" style="left:0;top:0"><rect x="743" y="344" width="2" height="85.88" fill="#4c575c"/><rect x="743" y="429.88" width="2" height="136.12" fill="#50b8ad"/><circle cx="744" cy="429.88" r="8" fill="#50b8ad"/></svg>
<div class="btn" style="left:788px;top:228px;width:54px;height:33px"></div>
<svg width="1" height="1" style="left:0;top:0"><g fill="#bec6ca"><path fill-rule="evenodd" d="M815 238.5 a5.5 5.5 0 1 0 0.01 0 Z M815 240 a4 4 0 1 0 0.01 0 Z"/><path d="M813.7 239.2 L814.1 236 L815.9 236 L816.3 239.2 Z" transform="rotate(0 815 244)"/><path d="M813.7 239.2 L814.1 236 L815.9 236 L816.3 239.2 Z" transform="rotate(36 815 244)"/><path d="M813.7 239.2 L814.1 236 L815.9 236 L816.3 239.2 Z" transform="rotate(72 815 244)"/><path d="M813.7 239.2 L814.1 236 L815.9 236 L816.3 239.2 Z" transform="rotate(108 815 244)"/><path d="M813.7 239.2 L814.1 236 L815.9 236 L816.3 239.2 Z" transform="rotate(144 815 244)"/><path d="M813.7 239.2 L814.1 236 L815.9 236 L816.3 239.2 Z" transform="rotate(180 815 244)"/><path d="M813.7 239.2 L814.1 236 L815.9 236 L816.3 239.2 Z" transform="rotate(216 815 244)"/><path d="M813.7 239.2 L814.1 236 L815.9 236 L816.3 239.2 Z" transform="rotate(252 815 244)"/><path d="M813.7 239.2 L814.1 236 L815.9 236 L816.3 239.2 Z" transform="rotate(288 815 244)"/><path d="M813.7 239.2 L814.1 236 L815.9 236 L816.3 239.2 Z" transform="rotate(324 815 244)"/></g></svg>
<div class="t" style="left:775px;top:276px;width:80px;text-align:center;font-size:12px;color:#9aa4a9">4,0 kHz</div>
<div class="t" style="left:775px;top:297px;width:80px;text-align:center;font-size:12px;color:#9aa4a9">Q 1,60</div>
<div class="t" style="left:775px;top:318px;width:80px;text-align:center;font-size:12px;color:#9aa4a9">+12,00</div>
<svg width="1" height="1" style="left:0;top:0"><rect x="814" y="344" width="2" height="73.32" fill="#4c575c"/><rect x="814" y="417.32" width="2" height="148.68" fill="#50b8ad"/><circle cx="815" cy="417.32" r="8" fill="#50b8ad"/></svg>
<div class="btn" style="left:859px;top:228px;width:54px;height:33px"></div>
<svg width="1" height="1" style="left:0;top:0"><g fill="#bec6ca"><path fill-rule="evenodd" d="M886 238.5 a5.5 5.5 0 1 0 0.01 0 Z M886 240 a4 4 0 1 0 0.01 0 Z"/><path d="M884.7 239.2 L885.1 236 L886.9 236 L887.3 239.2 Z" transform="rotate(0 886 244)"/><path d="M884.7 239.2 L885.1 236 L886.9 236 L887.3 239.2 Z" transform="rotate(36 886 244)"/><path d="M884.7 239.2 L885.1 236 L886.9 236 L887.3 239.2 Z" transform="rotate(72 886 244)"/><path d="M884.7 239.2 L885.1 236 L886.9 236 L887.3 239.2 Z" transform="rotate(108 886 244)"/><path d="M884.7 239.2 L885.1 236 L886.9 236 L887.3 239.2 Z" transform="rotate(144 886 244)"/><path d="M884.7 239.2 L885.1 236 L886.9 236 L887.3 239.2 Z" transform="rotate(180 886 244)"/><path d="M884.7 239.2 L885.1 236 L886.9 236 L887.3 239.2 Z" transform="rotate(216 886 244)"/><path d="M884.7 239.2 L885.1 236 L886.9 236 L887.3 239.2 Z" transform="rotate(252 886 244)"/><path d="M884.7 239.2 L885.1 236 L886.9 236 L887.3 239.2 Z" transform="rotate(288 886 244)"/><path d="M884.7 239.2 L885.1 236 L886.9 236 L887.3 239.2 Z" transform="rotate(324 886 244)"/></g></svg>
<div class="t" style="left:846px;top:276px;width:80px;text-align:center;font-size:12px;color:#9aa4a9">8,0 kHz</div>
<div class="t" style="left:846px;top:297px;width:80px;text-align:center;font-size:12px;color:#9aa4a9">Q 1,60</div>
<div class="t" style="left:846px;top:318px;width:80px;text-align:center;font-size:12px;color:#9aa4a9">+14,00</div>
<svg width="1" height="1" style="left:0;top:0"><rect x="885" y="344" width="2" height="67.04" fill="#4c575c"/><rect x="885" y="411.04" width="2" height="154.96" fill="#50b8ad"/><circle cx="886" cy="411.04" r="8" fill="#50b8ad"/></svg>
<div class="btn" style="left:930px;top:228px;width:54px;height:33px"></div>
<svg width="1" height="1" style="left:0;top:0"><g fill="#bec6ca"><path fill-rule="evenodd" d="M957 238.5 a5.5 5.5 0 1 0 0.01 0 Z M957 240 a4 4 0 1 0 0.01 0 Z"/><path d="M955.7 239.2 L956.1 236 L957.9 236 L958.3 239.2 Z" transform="rotate(0 957 244)"/><path d="M955.7 239.2 L956.1 236 L957.9 236 L958.3 239.2 Z" transform="rotate(36 957 244)"/><path d="M955.7 239.2 L956.1 236 L957.9 236 L958.3 239.2 Z" transform="rotate(72 957 244)"/><path d="M955.7 239.2 L956.1 236 L957.9 236 L958.3 239.2 Z" transform="rotate(108 957 244)"/><path d="M955.7 239.2 L956.1 236 L957.9 236 L958.3 239.2 Z" transform="rotate(144 957 244)"/><path d="M955.7 239.2 L956.1 236 L957.9 236 L958.3 239.2 Z" transform="rotate(180 957 244)"/><path d="M955.7 239.2 L956.1 236 L957.9 236 L958.3 239.2 Z" transform="rotate(216 957 244)"/><path d="M955.7 239.2 L956.1 236 L957.9 236 L958.3 239.2 Z" transform="rotate(252 957 244)"/><path d="M955.7 239.2 L956.1 236 L957.9 236 L958.3 239.2 Z" transform="rotate(288 957 244)"/><path d="M955.7 239.2 L956.1 236 L957.9 236 L958.3 239.2 Z" transform="rotate(324 957 244)"/></g></svg>
<div class="t" style="left:917px;top:276px;width:80px;text-align:center;font-size:12px;color:#9aa4a9">16,0 kHz</div>
<div class="t" style="left:917px;top:297px;width:80px;text-align:center;font-size:12px;color:#9aa4a9">Q 1,60</div>
<div class="t" style="left:917px;top:318px;width:80px;text-align:center;font-size:12px;color:#9aa4a9">+14,00</div>
<svg width="1" height="1" style="left:0;top:0"><rect x="956" y="344" width="2" height="67.04" fill="#4c575c"/><rect x="956" y="411.04" width="2" height="154.96" fill="#50b8ad"/><circle cx="957" cy="411.04" r="8" fill="#50b8ad"/></svg>
<div class="t" style="left:238px;top:619px;width:100px;text-align:right;font-size:12.5px">Eingang</div>
<div class="t" style="left:238px;top:657px;width:100px;text-align:right;font-size:12.5px">Ausgang</div>
<svg width="1" height="1" style="left:0;top:0"><rect x="352" y="624" width="104" height="2" fill="#50b8ad"/><rect x="456" y="624" width="143" height="2" fill="#4c575c"/><path d="M456 613 L461.6 619.3 A8 8 0 1 1 450.4 619.3 Z" fill="#50b8ad"/></svg>
<svg width="1" height="1" style="left:0;top:0"><rect x="352" y="662" width="154" height="2" fill="#50b8ad"/><rect x="506" y="662" width="93" height="2" fill="#4c575c"/><path d="M506 651 L511.6 657.3 A8 8 0 1 1 500.4 657.3 Z" fill="#50b8ad"/></svg>
<div class="t" style="left:607px;top:619px;font-size:12px;color:#8e989d">-3,1</div>
<div class="t" style="left:607px;top:657px;font-size:12px;color:#8e989d">5,0</div>
<div class="abs" style="left:643px;top:615px;width:281px;height:4px;background:#4c575c;box-shadow:0 1px 3px rgba(0,0,0,.5)"></div>
<div class="abs" style="left:643px;top:615px;width:36px;height:4px;background:#50b8ad"></div>
<div class="abs" style="left:643px;top:631px;width:281px;height:4px;background:#4c575c;box-shadow:0 1px 3px rgba(0,0,0,.5)"></div>
<div class="abs" style="left:643px;top:631px;width:36px;height:4px;background:#50b8ad"></div>
<div class="abs" style="left:643px;top:653px;width:281px;height:4px;background:#4c575c;box-shadow:0 1px 3px rgba(0,0,0,.5)"></div>
<div class="abs" style="left:643px;top:653px;width:36px;height:4px;background:#50b8ad"></div>
<div class="abs" style="left:643px;top:669px;width:281px;height:4px;background:#4c575c;box-shadow:0 1px 3px rgba(0,0,0,.5)"></div>
<div class="abs" style="left:643px;top:669px;width:36px;height:4px;background:#50b8ad"></div>
<div class="t" style="left:933px;top:619px;font-size:12px;color:#5d676c">-40</div>
<div class="t" style="left:933px;top:657px;font-size:12px;color:#5d676c">-25</div>
<div class="t" style="left:967px;top:619px;font-size:12px;color:#5d676c">-40</div>
<div class="t" style="left:967px;top:657px;font-size:12px;color:#5d676c">-25</div>
<div class="abs" style="left:960px;top:612px;width:1px;height:64px;background:#222a2f"></div>
<div class="btn" style="left:586px;top:694px;width:104px;height:34px"></div>
<div class="t" style="left:598px;top:704px;font-size:12.5px;font-weight:bold">Zurücksetzen</div>
<div class="t" style="left:793px;top:704px;font-size:12.5px">Provided by <b>Linux Studio Plugins</b></div>
<div class="abs" style="left:628px;top:57px;width:291px;height:176px;background:#2a363b;border:1px solid #33404a"></div>
<svg width="1" height="1" style="left:0;top:0"><path d="M761.5 58 L773 46.5 L784.5 58 Z" fill="#2a363b" stroke="#33404a" stroke-width="1"/><path d="M762 58.5 L784 58.5" stroke="#2a363b" stroke-width="2"/></svg>
<svg width="1" height="1" style="left:0;top:0">
<path d="M747.8 79 Q747.8 77.8 749 77.8 L750.8 77.8 L755 73.8 L755 88.2 L750.8 84.2 L749 84.2 Q747.8 84.2 747.8 83 Z" fill="#c4ccd0"/>
<g stroke="#c4ccd0" stroke-width="1.8" stroke-linecap="round"><line x1="756.8" y1="77.3" x2="760.2" y2="73.9"/><line x1="756.5" y1="81" x2="762.6" y2="81"/><line x1="756.8" y1="84.7" x2="760.2" y2="88.1"/></g>
<g transform="translate(782 73) scale(1)"><rect x="4.9" y="0" width="6.2" height="11" rx="3.1" fill="#c4ccd0"/><path d="M2.7 6.2 V7.6 A5.3 5.3 0 0 0 13.3 7.6 V6.2" fill="none" stroke="#c4ccd0" stroke-width="1.8"/><rect x="7.05" y="12.8" width="1.9" height="3.2" fill="#c4ccd0"/></g>
<rect x="739" y="97" width="68" height="1" fill="#4a555a"/><rect x="773" y="96" width="34" height="2" fill="#00bcd4"/>
</svg>
<div class="circ" style="left:635px;top:116px;width:28px;height:32px"></div>
<div class="abs" style="left:669px;top:116px;width:28px;height:32px;border-radius:50%;background:#009688;box-shadow:0 1px 2px rgba(0,0,0,.35)"></div>
<svg width="1" height="1" style="left:0;top:0"><path d="M676 132 H690 M683 125 V139" stroke="#fff" stroke-width="1.8"/>
<path d="M642.2 136 V128.3 Q642.2 126.6 643.9 126.6 H647 L648.7 128.3 H653 Q654.3 128.3 654.3 129.6 V130.8" fill="none" stroke="#c4ccd0" stroke-width="1.9"/>
<path d="M644.8 135.2 L646.4 131.8 Q646.9 130.9 647.9 130.9 H655.3 Q656.2 130.9 656 131.8 L654.8 136.3 Q654.5 137.6 653.2 137.6 H643.6 Q642.2 137.6 642.2 136.2" fill="none" stroke="#c4ccd0" stroke-width="1.9" stroke-linejoin="round"/></svg>
<div class="t" style="left:711px;top:126px;font-size:12.5px;color:#7f8a8f">Name</div>
<div class="abs" style="left:703px;top:147px;width:208px;height:1px;background:#4a555a"></div>
<div class="abs" style="left:636px;top:166px;width:276px;height:60px;background:#28343a;border:1px solid #252d32"></div>
<div class="t" style="left:660px;top:184px;font-size:12.5px">QO100</div>
<div class="btn" style="left:719px;top:173px;width:54px;height:34px"></div>
<div class="t" style="left:731px;top:184px;font-size:12.5px;font-weight:bold">Load</div>
<div class="circ" style="left:782px;top:175px;width:30px;height:30px"></div>
<div class="abs" style="left:824px;top:175px;width:30px;height:30px;border-radius:50%;background:#00bcd4;box-shadow:0 1px 2px rgba(0,0,0,.35)"></div>
<div class="circ" style="left:866px;top:175px;width:30px;height:30px"></div>
<svg width="1" height="1" style="left:0;top:0">
<rect x="796" y="182" width="2" height="11.5" fill="#c4ccd0"/><path d="M792.6 191.4 L794 190 L797 193 L800 190 L801.4 191.4 L797 195.6 Z" fill="#c4ccd0"/><rect x="790" y="196" width="14" height="2" fill="#c4ccd0"/>
<path d="M874.5 190 H887.5" stroke="#c4ccd0" stroke-width="1.8"/>
<path d="M833.6 188.2 A5.8 5.8 0 0 1 843.6 187" fill="none" stroke="#fff" stroke-width="2.1"/><path d="M841 189.5 L847 189.5 L847 183.8 Z" fill="#fff"/>
<path d="M844.4 191.8 A5.8 5.8 0 0 1 834.4 193" fill="none" stroke="#fff" stroke-width="2.1"/><path d="M831 190.2 L837 190.2 L831 196 Z" fill="#fff"/>
</svg>
<svg width="999" height="738" style="left:0;top:0" fill="none" stroke="#ff0000" stroke-width="4" stroke-linecap="round" stroke-linejoin="round">
<path d="M720 21.5 Q716 19.5 716.5 14 Q717.5 9 722 9 Q726.5 9.5 726.5 12 Q725.5 17 720 21.5 Q713 24.5 712.6 29 Q712.6 35 717 36.5 Q722 37.5 726 35 Q728.3 32 728 27.5 Q727 24 723.5 23.5 Q721.5 23 720 21.5 Z" stroke-width="3.6"/>
<path d="M786.5 8.2 Q776 9.8 764 10 Q753 10.5 748.5 15.5 Q744 21 744 28 Q744.5 34.5 751 34.7 L787 34 Q797 32.5 799.5 26 Q800.5 19 799 14 Q796.5 10.8 787 11" stroke-width="3.5"/>
<path d="M793 62 Q786 63 781.5 68.5 Q776 75.5 776 84 Q776.5 92 782 95.5 Q790 100.5 798.5 101 Q808 100 812 93 Q814.5 86 812.8 79 Q810 70 803 65 Q798 62 791.5 62.5" stroke-width="3.7"/>
<path d="M848 77 Q845 74.5 840 78.5 Q837.5 84 840 88.5 Q843 92.5 848 91.5 Q852.5 88.5 853 81.5 Q856 87 857 91 L857.4 105 Q856 106.5 851.7 104.7 L842.8 103.9 Q839 103 837.5 100.7" stroke-width="3.7"/>
</svg>
</body></html>
